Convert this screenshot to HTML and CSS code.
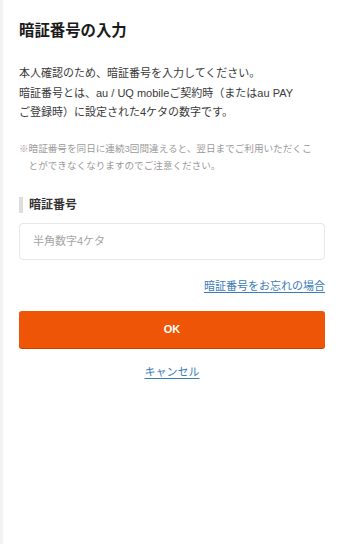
FILE: index.html
```html
<!DOCTYPE html>
<html lang="ja">
<head>
<meta charset="utf-8">
<link rel="stylesheet" href="styles.css">
</head>
<body>
<main class="page">
  <h1 class="title">暗証番号の入力</h1>
  <p class="lead">本人確認のため、暗証番号を入力してください。<br>暗証番号とは、au / UQ mobileご契約時（またはau PAY<br>ご登録時）に設定された4ケタの数字です。</p>
  <p class="note">※暗証番号を同日に連続3回間違えると、翌日までご利用いただくことができなくなりますのでご注意ください。</p>
  <div class="label">暗証番号</div>
  <input class="field" type="text" placeholder="半角数字4ケタ">
  <div class="forgot-row"><a class="link" href="#">暗証番号をお忘れの場合</a></div>
  <button class="ok" type="button">OK</button>
  <div class="cancel-row"><a class="link" href="#">キャンセル</a></div>
</main>
</body>
</html>
```

FILE: styles.css
```css
html, body {
  margin: 0;
  padding: 0;
  background: #ffffff;
}
body {
  border-left: 3px solid #f3f3f3;
  min-height: 544px;
  box-sizing: border-box;
  font-family: "Liberation Sans", "Noto Sans CJK JP", sans-serif;
  color: #333333;
}
.page {
  padding: 20px 14px 0 16px;
  display: flex;
  flex-direction: column;
}
.title {
  margin: 0;
  font-size: 15.4px;
  line-height: 22px;
  font-weight: 700;
  color: #1a1a1a;
}
.lead {
  margin: 22px 0 0;
  font-size: 11px;
  line-height: 19.5px;
  color: #3a3a3a;
}
.note {
  margin: 17px 0 0;
  padding: 0 10px 0 1em;
  font-size: 9.6px;
  line-height: 17px;
  color: #9a9a9a;
  text-indent: -1em;
}
.label {
  margin: 23px 0 0;
  border-left: 4px solid #dddddd;
  padding-left: 6px;
  font-size: 12px;
  line-height: 16px;
  font-weight: 700;
  color: #333333;
}
.field {
  margin: 10px 0 0;
  height: 37px;
  box-sizing: border-box;
  border: 1px solid #e8e8e8;
  border-radius: 4px;
  padding: 0 13px;
  font-family: inherit;
  font-size: 11px;
  color: #333;
  background: #fff;
  outline: none;
}
.field::placeholder {
  color: #a5a5a5;
}
.forgot-row {
  margin-top: 18px;
  text-align: right;
  font-size: 11px;
  line-height: 16px;
}
.link {
  color: #3b7cb8;
  text-decoration: underline;
  text-underline-offset: 2px;
}
.ok {
  margin: 17px 0 0;
  height: 37px;
  border: 0;
  border-radius: 3px;
  background: #ef5506;
  box-shadow: 0 1px 0 #c94200;
  color: #ffffff;
  font-family: "Liberation Sans", "Noto Sans CJK JP", sans-serif;
  font-weight: 700;
  font-size: 11px;
}
.cancel-row {
  margin-top: 16px;
  text-align: center;
  font-size: 11px;
  line-height: 16px;
}
```
